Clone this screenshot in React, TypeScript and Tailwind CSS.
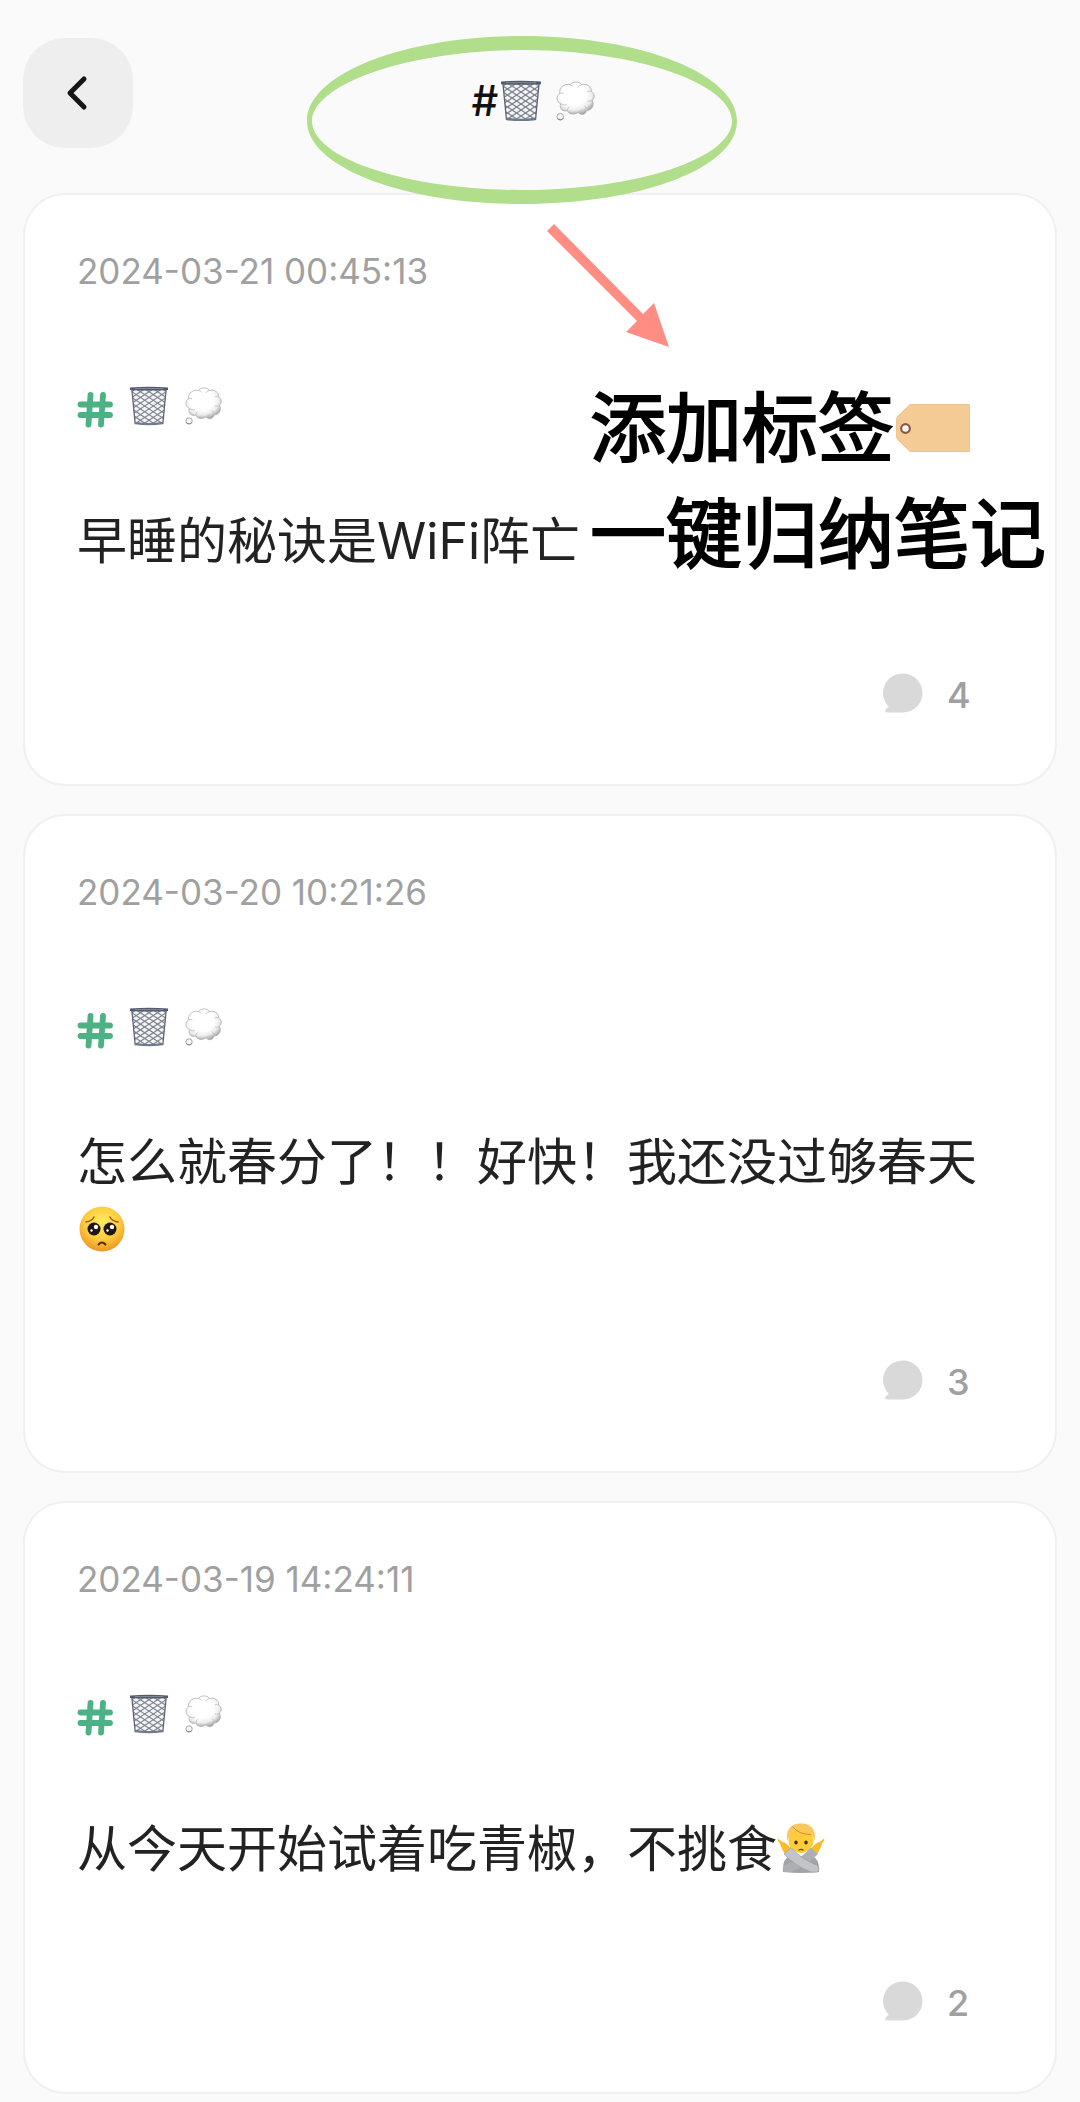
import React, { useId } from "react";

interface IconProps {
  className?: string;
}

interface Note {
  id: number;
  date: string;
  text: string;
  emoji?: React.ReactNode;
  comments: number;
}

const TrashIcon: React.FC<IconProps> = ({ className }) => {
  const id = useId();
  return (
    <svg viewBox="0 0 42 42" className={className} role="img" aria-label="wastebasket">
      <defs>
        <clipPath id={id}>
          <path d="M3 4h36l-3.500 36h-29z" />
        </clipPath>
      </defs>
      <path d="M3 4h36l-3.500 36h-29z" fill="#f3f4f6" />
      <g clipPath={`url(#${id})`} fill="none" stroke="#7d828c" strokeWidth="1.200">
        <path d="M-39 2L21 42M-30 2L30 42M-21 2L39 42M-12 2L48 42M-3 2L57 42M6 2L66 42M15 2L75 42M24 2L84 42M33 2L93 42" />
        <path d="M81 2L21 42M72 2L12 42M63 2L3 42M54 2L-6 42M45 2L-15 42M36 2L-24 42M27 2L-33 42M18 2L-42 42M9 2L-51 42" />
      </g>
      <path d="M3 4l3.500 36M39 4l-3.500 36" stroke="#5c6270" strokeWidth="1.300" />
      <path d="M6.500 37.500Q21 40 35.500 37.500v2.700Q21 42 6.500 40.200z" fill="#707a8e" />
      <path d="M1 1.500Q21 0 41 1.500v2.700Q21 5.500 1 4.200z" fill="#525b6b" />
      <path d="M6 2.700h30" stroke="#8f97a6" strokeWidth="0.800" />
    </svg>
  );
};

const ThoughtIcon: React.FC<IconProps> = ({ className }) => {
  const id = useId();
  return (
    <svg viewBox="0 0 42 42" className={className} role="img" aria-label="thought balloon">
      <defs>
        <radialGradient id={id} cx="0.45" cy="0.38" r="0.62">
          <stop offset="0.55" stopColor="#ffffff" />
          <stop offset="0.8" stopColor="#ececec" />
          <stop offset="1" stopColor="#adadad" />
        </radialGradient>
      </defs>
      <path
        d="M15 4C17 0 25 0 27 4C32 2 38 6 37 11C41 13 41 18 38 20C41 26 37 31 32 31C31 36 26 36 23 33C19 36 13 35 12 31C7 33 3 28 5 24C0 22 0 15 4 13C3 7 9 2 15 4Z"
        fill={`url(#${id})`}
        stroke="#a9a9a9"
        strokeWidth="0.800"
      />
      <path d="M5 24q3 2 6 1M12 31q0-3 2-4M23 33q3-1 4-3M32 31q0-3-2-5M38 20q-2 2-5 1M37 11q-2-1-4 0M27 4q-3 0-4 3M15 4q2 0 3 2M4 13q2-1 4 0" fill="none" stroke="#bdbdbd" strokeWidth="0.900" />
      <circle cx="4.500" cy="37.500" r="3.500" fill="#f4f4f4" stroke="#a0a0a0" />
      <path d="M1.500 39a3.500 3.500 0 0 0 6 0" fill="none" stroke="#7e7e7e" />
    </svg>
  );
};

const HashIcon: React.FC<IconProps> = ({ className }) => (
  <svg viewBox="0 0 36 36" className={className} aria-hidden="true">
    <path d="M13.500 3L11.500 32.500M26 3L24 32.500M3.500 12.500H33M3.500 23H33" stroke="#4cb184" strokeWidth="5.800" strokeLinecap="round" />
  </svg>
);

const BubbleIcon: React.FC<IconProps> = ({ className }) => (
  <svg viewBox="0 0 40 40" className={className} aria-hidden="true">
    <path d="M20 0.500a19.500 19.500 0 0 1 0 39H4.500c-2.500 0-3-2.200-1.300-3.500l2.500-2.300A19.500 19.500 0 0 1 20 0.500Z" fill="#d9d9d9" />
  </svg>
);

const PleadingFace: React.FC<IconProps> = ({ className }) => {
  const id = useId();
  return (
    <svg viewBox="0 0 46 46" className={className} role="img" aria-label="pleading face">
      <defs>
        <radialGradient id={id} cx="0.5" cy="0.35" r="0.65">
          <stop offset="0" stopColor="#ffea62" />
          <stop offset="0.6" stopColor="#fdcb3d" />
          <stop offset="1" stopColor="#ee9420" />
        </radialGradient>
      </defs>
      <circle cx="23" cy="23" r="22.500" fill={`url(#${id})`} />
      <path d="M7 16q6-1 8-5M39 16q-6-1-8-5" fill="none" stroke="#9b5c12" strokeWidth="1.500" strokeLinecap="round" />
      <circle cx="15" cy="23" r="6.500" fill="#201713" />
      <circle cx="31" cy="23" r="6.500" fill="#201713" />
      <circle cx="17" cy="21" r="2.200" fill="#fff" />
      <circle cx="33" cy="21" r="2.200" fill="#fff" />
      <circle cx="12.500" cy="24.500" r="1.200" fill="#fff" />
      <circle cx="28.500" cy="24.500" r="1.200" fill="#fff" />
      <path d="M19.500 38.500q3.500-4 7 0" fill="none" stroke="#5a3010" strokeWidth="2" strokeLinecap="round" />
    </svg>
  );
};

const NoGesture: React.FC<IconProps> = ({ className }) => (
  <svg viewBox="0 0 48 50" className={className} role="img" aria-label="person gesturing no">
    <path d="M6 49q-1-13 7-16h22q8 3 7 16q-18 2-36 0z" fill="#a2a3a7" />
    <ellipse cx="24" cy="17.500" rx="12.500" ry="12.500" fill="#ffcd3c" />
    <path d="M10.500 18C8 6 15 0.500 24 0.500S40 6 37.500 18q-1-5-4-8q-9 0-16-5q-1 6-5 8q-1 2-2 5z" fill="#fbc65a" />
    <path d="M15.500 3.500q6 8 18.500 8" fill="none" stroke="#cf8f2e" strokeWidth="1" />
    <ellipse cx="19" cy="19.500" rx="1.700" ry="2.100" fill="#4a2a10" />
    <ellipse cx="29" cy="19.500" rx="1.700" ry="2.100" fill="#4a2a10" />
    <path d="M22 27q2-1.200 4 0" fill="none" stroke="#7a3d14" strokeWidth="1.400" strokeLinecap="round" />
    <path d="M1 15.500Q3 17 5.500 19Q9 19 13.500 25.500L8 31Q4 25 3 20.500Q0 17.500 1 15.500zM47 15.500Q45 17 42.500 19Q39 19 34.500 25.500L40 31Q44 25 45 20.500Q48 17.500 47 15.500z" fill="#fdbb24" />
    <path d="M34 24.500l7 6.500Q30 43 14 49H7.500q-3-3 0-6.500Q24 36 34 24.500z" fill="#aeafb2" />
    <path d="M14 24.500L7 31Q18 43 34 49h6.500q3-3 0-6.500Q24 36 14 24.500z" fill="#c3c4c7" stroke="#98999d" strokeWidth="0.600" />
  </svg>
);

const LabelIcon: React.FC<IconProps> = ({ className }) => (
  <svg viewBox="0 0 74 48" className={className} role="img" aria-label="label">
    <path d="M14 0.500H73.500V47.500H14L2 36Q0.500 34.500 0.500 32V16Q0.500 13.500 2 12Z" fill="#f5cb95" stroke="#edbd80" strokeWidth="0.800" />
    <circle cx="9.500" cy="24.500" r="4.300" fill="#fff" stroke="#8a5544" strokeWidth="2.200" />
  </svg>
);

const notes: Note[] = [
  { id: 1, date: "2024-03-21 00:45:13", text: "早睡的秘诀是WiFi阵亡", comments: 4 },
  {
    id: 2,
    date: "2024-03-20 10:21:26",
    text: "怎么就春分了！！好快！我还没过够春天",
    emoji: <PleadingFace className="mx-[2px] inline-block size-[46px] align-[-6px]" />,
    comments: 3,
  },
  {
    id: 3,
    date: "2024-03-19 14:24:11",
    text: "从今天开始试着吃青椒，不挑食",
    emoji: <NoGesture className="inline-block h-[50px] w-[48px] align-[-6px]" />,
    comments: 2,
  },
];

const NoteCard: React.FC<{ note: Note; children?: React.ReactNode }> = ({ note, children }) => (
  <article className="relative rounded-[42px] border-2 border-[#eff0f1] bg-white px-[52px] pt-[52px] pb-[67px]">
    <time className="block text-[35px] leading-[48px] text-[#a0a0a0]">{note.date}</time>
    <a href="#tag" className="mt-[87px] flex h-12 w-fit items-center">
      <HashIcon className="mt-2 size-9" />
      <TrashIcon className="ml-4 size-10" />
      <ThoughtIcon className="ml-4 size-[38px]" />
    </a>
    <p className="mt-[78px] text-[50px] leading-[66px] text-[#222]">
      {note.text}
      {note.emoji}
    </p>
    <div className="mt-[95px] flex justify-end pr-[34px]">
      <button type="button" aria-label={`${note.comments} comments`} className="flex h-12 items-center gap-6">
        <BubbleIcon className="size-10" />
        <span className="w-[22px] pt-1 text-center text-[36px] leading-[44px] font-medium text-[#a0a0a0]">
          {note.comments}
        </span>
      </button>
    </div>
    {children}
  </article>
);

// Hand-drawn callouts that sit on top of the first card
const Annotation: React.FC = () => (
  <>
    <svg viewBox="0 0 122 124" className="absolute top-[29px] left-[522px] w-[122px]" aria-hidden="true">
      <path d="M7 0L96 90L107 79L122 123L79 108L90 97L0 7Z" fill="#ff8d83" />
    </svg>
    <h2 className="absolute top-[180px] right-[9px] text-[76px] leading-[106px] font-normal whitespace-nowrap text-black [-webkit-text-stroke:2px_black]">
      添加标签
      <LabelIcon className="ml-[2px] inline-block w-[74px] align-[4px]" />
      <br />
      一键归纳笔记
    </h2>
  </>
);

const App: React.FC = () => (
  <main className="min-h-screen bg-[#fafafa] px-[23px] pb-[9px] font-[Inter,'Noto_Sans_CJK_SC',sans-serif]">
    <header className="relative grid grid-cols-[110px_1fr_110px] pt-[38px] pb-[45px]">
      <button
        type="button"
        aria-label="Back"
        className="flex size-[110px] items-center justify-center rounded-[42px] bg-[#eee]"
      >
        <svg viewBox="0 0 24 38" className="h-[38px] w-6" fill="none" aria-hidden="true">
          <path d="M18 5L4 19L18 33" stroke="#161616" strokeWidth="5" strokeLinecap="round" strokeLinejoin="round" />
        </svg>
      </button>
      <h1 className="flex items-center justify-center pt-4 pr-3 text-[42px] leading-[48px] font-medium text-[#111]">
        <span>#</span>
        <TrashIcon className="ml-[2px] size-[42px]" />
        <ThoughtIcon className="ml-[14px] size-10" />
      </h1>
      <svg
        viewBox="0 0 430 168"
        className="pointer-events-none absolute top-9 left-1/2 z-10 w-[430px] -translate-x-[233px]"
        aria-hidden="true"
      >
        <path
          fillRule="evenodd"
          fill="#b0de8a"
          d="M0 85C0 38 96 0 215 0S430 38 430 85S334 168 215 168S0 131 0 85ZM5 85C5 122 99 154 215 154S425 122 425 85S331 14 215 14S5 49 5 85Z"
        />
      </svg>
    </header>

    <section className="flex flex-col gap-7">
      {notes.map((note, index) => (
        <NoteCard key={note.id} note={note}>
          {index === 0 && <Annotation />}
        </NoteCard>
      ))}
    </section>
  </main>
);

export default App;
